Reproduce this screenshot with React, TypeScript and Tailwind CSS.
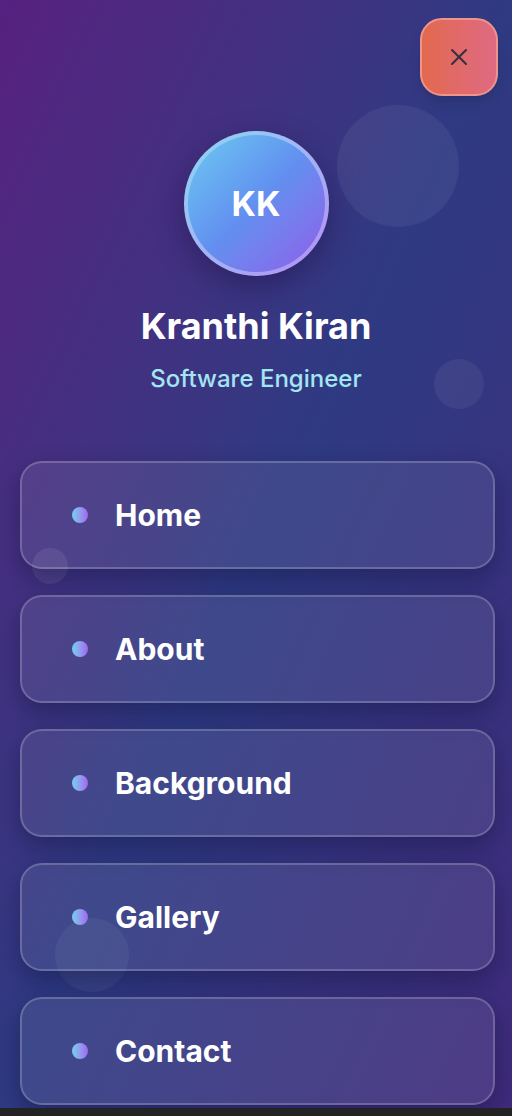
import { X } from 'lucide-react';

const menuItems = ['Home', 'About', 'Background', 'Gallery', 'Contact'];

// Soft floating bubbles behind the content
const Bubbles = () => (
  <>
    <div className="absolute left-[337px] top-[105px] h-[122px] w-[122px] rounded-full bg-white/[0.06]" />
    <div className="absolute left-[434px] top-[359px] h-[50px] w-[50px] rounded-full bg-white/[0.06]" />
    <div className="absolute left-[32px] top-[548px] h-[36px] w-[36px] rounded-full bg-white/[0.08]" />
    <div className="absolute left-[55px] top-[918px] h-[74px] w-[74px] rounded-full bg-white/[0.05]" />
  </>
);

const MenuItem = ({ label }: { label: string }) => (
  <button className="flex h-[108px] w-full items-center rounded-[22px] border-2 border-white/20 bg-white/[0.08] pl-[50px] shadow-[0_10px_25px_rgba(10,10,50,0.35)]">
    <span className="h-4 w-4 rounded-full bg-gradient-to-r from-[#6fd0ec] to-[#a063f0]" />
    <span className="ml-[27px] text-[30px] font-bold text-white">{label}</span>
  </button>
);

export default function App() {
  return (
    <div className="h-[1116px] w-full bg-[#232323]" style={{ fontFamily: 'Inter, "Noto Sans", sans-serif' }}>
      <div className="relative h-[1108px] overflow-hidden bg-gradient-to-br from-[#56207f] via-[#2e3a82] to-[#3f2b7b]">
        <Bubbles />
        <div className="relative flex flex-col">
          <div className="flex justify-end pr-[14px] pt-[18px]">
            <button className="flex h-[78px] w-[78px] items-center justify-center rounded-[22px] border-2 border-[#f0948a] bg-gradient-to-r from-[#e2694d] to-[#df6a82] shadow-lg">
              <X className="h-7 w-7 text-[#3a3040]" strokeWidth={1.8} />
            </button>
          </div>

          <div className="mt-[35px] flex flex-col items-center">
            <div className="rounded-full bg-gradient-to-br from-[#86d8f2] to-[#b48cf5] p-[4px] shadow-[0_10px_30px_rgba(20,10,60,0.4)]">
              <div className="flex h-[137px] w-[137px] items-center justify-center rounded-full bg-gradient-to-br from-[#6cc9f0] via-[#628ff0] to-[#8b5ce8]">
                <span className="text-[34px] font-bold text-white">KK</span>
              </div>
            </div>
            <h1 className="mt-[28px] text-[36px] font-bold leading-[44px] text-white">Kranthi Kiran</h1>
            <p className="mt-[16px] text-[24px] font-medium leading-[30px] text-[#a3e6f2]">Software Engineer</p>
          </div>

          <nav className="ml-5 mr-[17px] mt-[67px] flex flex-col gap-[26px]">
            {menuItems.map(item => (
              <MenuItem key={item} label={item} />
            ))}
          </nav>
        </div>
      </div>
    </div>
  );
}
